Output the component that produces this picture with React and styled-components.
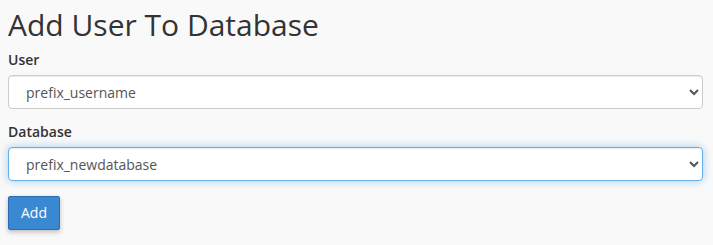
import React from "react";
import styled, { createGlobalStyle } from "styled-components";

const Global = createGlobalStyle`
  html, body { margin: 0; padding: 0; background: #f9f9f9; }
  body { font-family: "Open Sans", "Liberation Sans", sans-serif; color: #333; }
  * { box-sizing: border-box; }
`;

const Page = styled.div`
  padding: 8px 10px 8px 8px;
`;

const Title = styled.h1`
  margin: 0 0 9px;
  font-size: 30px;
  font-weight: 400;
  line-height: 33px;
  color: #333;
`;

const Group = styled.div`
  margin-bottom: ${(p) => p.$mb || 13}px;
`;

const Label = styled.label`
  display: block;
  font-size: 14px;
  font-weight: 600;
  line-height: 20px;
  margin-bottom: 5px;
  color: #333;
`;

const Select = styled.select`
  display: block;
  width: 100%;
  height: 34px;
  padding: 6px 10px 6px 13px;
  font-family: "Open Sans", "Liberation Sans", sans-serif;
  font-size: 14px;
  color: #555;
  background: #fff;
  border: 1px solid ${(p) => (p.$focus ? "#66afe9" : "#ccc")};
  border-radius: 4px;
  box-shadow: ${(p) =>
    p.$focus
      ? "inset 0 1px 1px rgba(0,0,0,.075), 0 0 8px rgba(102,175,233,.6)"
      : "inset 0 1px 1px rgba(0,0,0,.075)"};
  outline: none;
`;

const Button = styled.button`
  font-family: "Open Sans", "Liberation Sans", sans-serif;
  font-size: 14px;
  line-height: 20px;
  height: 34px;
  padding: 6px 12px;
  color: #fff;
  background: #3a88d1;
  border: 1px solid #2a6cae;
  border-radius: 2px;
  box-shadow: 0 2px 5px rgba(0,0,0,.25);
  cursor: pointer;
`;

export default function App() {
  return (
    <>
      <Global />
      <Page>
        <Title>Add User To Database</Title>
        <Group>
          <Label htmlFor="user">User</Label>
          <Select id="user" defaultValue="u">
            <option value="u">prefix_username</option>
          </Select>
        </Group>
        <Group $mb={15}>
          <Label htmlFor="db">Database</Label>
          <Select id="db" $focus defaultValue="d">
            <option value="d">prefix_newdatabase</option>
          </Select>
        </Group>
        <Button>Add</Button>
      </Page>
    </>
  );
}
